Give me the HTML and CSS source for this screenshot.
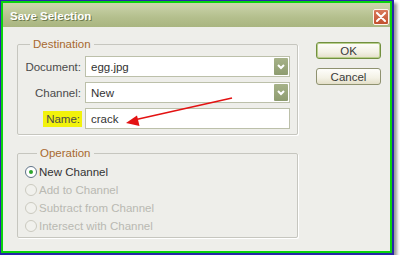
FILE: index.html
```html
<!DOCTYPE html>
<html lang="en">
<head>
    <meta charset="UTF-8">
    <title>Save Selection</title>
    <link rel="stylesheet" href="styles.css">
</head>
<body>
    <div class="window">
        <div class="frame">
            <div class="titlebar">
                <span class="title">Save Selection</span>
                <span class="close">
                    <svg width="10" height="10" viewBox="0 0 10 10"><path d="M1 1L9 9M9 1L1 9" stroke="#fff" stroke-width="2" stroke-linecap="round"/></svg>
                </span>
            </div>
            <div class="content">
                <div class="groups">
                    <fieldset class="group dest">
                        <legend>Destination</legend>
                        <div class="rows">
                            <label class="lbl">Document:</label>
                            <div class="field">
                                <span class="value">egg.jpg</span>
                                <span class="drop"><svg width="8" height="6" viewBox="0 0 8 6"><path d="M1 1L4 4L7 1" fill="none" stroke="#fff" stroke-width="2"/></svg></span>
                            </div>
                            <label class="lbl">Channel:</label>
                            <div class="field">
                                <span class="value">New</span>
                                <span class="drop"><svg width="8" height="6" viewBox="0 0 8 6"><path d="M1 1L4 4L7 1" fill="none" stroke="#fff" stroke-width="2"/></svg></span>
                            </div>
                            <label class="lbl"><span class="hl">Name:</span></label>
                            <div class="field">
                                <span class="value">crack</span>
                            </div>
                        </div>
                    </fieldset>
                    <fieldset class="group op">
                        <legend>Operation</legend>
                        <div class="radio on"><span class="dot"></span>New Channel</div>
                        <div class="radio off"><span class="dot"></span>Add to Channel</div>
                        <div class="radio off"><span class="dot"></span>Subtract from Channel</div>
                        <div class="radio off"><span class="dot"></span>Intersect with Channel</div>
                    </fieldset>
                </div>
                <div class="buttons">
                    <button class="btn default">OK</button>
                    <button class="btn">Cancel</button>
                </div>
            </div>
        </div>
        <!-- red annotation arrow -->
        <svg class="arrow" width="400" height="260" viewBox="0 0 400 260">
            <line x1="232" y1="98" x2="134" y2="120" stroke="#e31212" stroke-width="1.6"/>
            <path d="M126 123L137 115.5L139.5 126Z" fill="#e31212"/>
        </svg>
    </div>
</body>
</html>
```

FILE: styles.css
```css
body {
    margin: 0;
    background: #fff;
    font-family: "Liberation Sans", Arial, sans-serif;
    font-size: 11.5px;
    color: #444;
}
.window {
    position: relative;
    width: 394px;
    height: 255px;
    box-sizing: border-box;
    border: 1px solid #2626a8;
    border-right-width: 2px;
    border-bottom-width: 2px;
    box-shadow: 3px 3px 3px rgba(0, 0, 0, 0.4);
}
.frame {
    height: 100%;
    box-sizing: border-box;
    border: 2px solid #0ad20e;
    background: #eeeeea;
    display: flex;
    flex-direction: column;
}
.titlebar {
    height: 24px;
    flex: none;
    display: flex;
    align-items: center;
    justify-content: space-between;
    padding: 0 1px 0 7px;
    background: linear-gradient(#ccd5ad, #b4bf8d 60%, #a9b580);
}
.title {
    color: #fff;
    font-weight: bold;
    font-size: 11.5px;
    text-shadow: 1px 1px 0 #6e7a4c;
    margin-top: 1px;
}
.close {
    width: 16px;
    height: 16px;
    display: flex;
    align-items: center;
    justify-content: center;
    border-radius: 2px;
    background: linear-gradient(#d97a5c, #c2502f);
    border: 1px solid #fff5ee;
    box-sizing: border-box;
    margin-top: 3px;
}
.content {
    flex: 1;
    display: flex;
    gap: 18px;
    padding: 10px 0 0 14px;
}
.groups {
    width: 281px;
    display: flex;
    flex-direction: column;
    gap: 11px;
}
.group {
    margin: 0;
    padding: 0;
    border: 1px solid #c6c6bf;
    box-shadow: 1px 1px 0 #fff;
    border-radius: 2px;
    box-sizing: border-box;
}
.group legend {
    margin-left: 12px;
    padding: 0 3px;
    line-height: 14px;
    color: #a8692f;
}
.dest {
    height: 98px;
}
.op {
    height: 92px;
    padding: 3px 0 0 7px;
}
.rows {
    display: grid;
    grid-template-columns: 63px 205px;
    grid-auto-rows: 21px;
    column-gap: 4px;
    row-gap: 5px;
    padding-top: 5px;
}
.lbl {
    display: flex;
    align-items: center;
    justify-content: flex-end;
    color: #4a4a4a;
}
.hl {
    background: #f2f20c;
    padding: 2px 2px 2px 3px;
    margin-right: -1px;
}
.field {
    display: flex;
    align-items: center;
    justify-content: space-between;
    background: #fff;
    border: 1px solid #bcc0aa;
    box-sizing: border-box;
    padding-left: 5px;
    color: #333;
}
.drop {
    width: 14px;
    height: 17px;
    margin-right: 1px;
    display: flex;
    align-items: center;
    justify-content: center;
    background: linear-gradient(#a6b288, #8e9c70);
    border-radius: 1px;
}
.radio {
    height: 18px;
    display: flex;
    align-items: center;
    gap: 2px;
}
.dot {
    width: 12px;
    height: 12px;
    box-sizing: border-box;
    border-radius: 50%;
    border: 1px solid #cbcac0;
    background: #f1f1ed;
    display: flex;
    align-items: center;
    justify-content: center;
}
.on {
    color: #333;
}
.on .dot {
    border-color: #5f7387;
    background: #fff;
}
.on .dot::after {
    content: "";
    width: 4px;
    height: 4px;
    border-radius: 50%;
    background: #2ea52e;
}
.off {
    color: #b9b9b2;
}
.buttons {
    width: 65px;
    display: flex;
    flex-direction: column;
    gap: 9px;
    padding-top: 5px;
}
.btn {
    height: 17px;
    padding: 0;
    font-family: inherit;
    font-size: 11.5px;
    color: #3a3a3a;
    border: 1px solid #8f9270;
    border-radius: 3px;
    background: linear-gradient(#fefefb, #f3f1e5 60%, #e4dfc8);
}
.default {
    border-color: #72903f;
    box-shadow: inset 0 0 0 1px #b9cf8c;
}
.arrow {
    position: absolute;
    left: -1px;
    top: -1px;
    pointer-events: none;
}
```
